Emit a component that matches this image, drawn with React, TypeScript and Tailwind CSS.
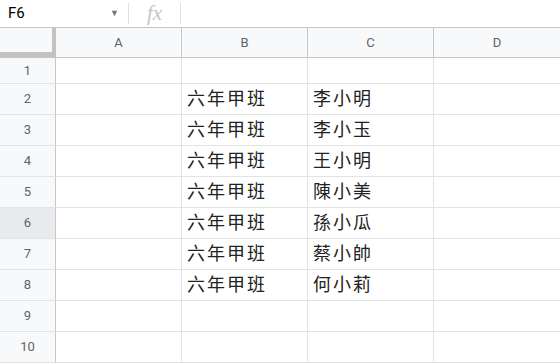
const cols = ["A", "B", "C", "D"];

const rows: [string, string][] = [
  ["", ""],
  ["六年甲班", "李小明"],
  ["六年甲班", "李小玉"],
  ["六年甲班", "王小明"],
  ["六年甲班", "陳小美"],
  ["六年甲班", "孫小瓜"],
  ["六年甲班", "蔡小帥"],
  ["六年甲班", "何小莉"],
  ["", ""],
  ["", ""],
];

const cjk = "font-['Noto_Sans_CJK_TC','Noto_Sans_CJK_SC',sans-serif]";

export default function App() {
  return (
    <div className="h-[363px] w-[560px] overflow-hidden bg-white font-['Roboto','Liberation_Sans',sans-serif]">
      {/* name box + formula bar */}
      <div className="flex h-[28px] items-center border-b border-[#c7c7c7]">
        <div className="flex w-[128px] items-center pl-[8px] pr-[9px]">
          <span className="flex-1 text-[15px] text-black">F6</span>
          <span className="text-[9px] text-[#777]">▼</span>
        </div>
        <div className="h-[21px] w-px bg-[#e0e0e0]" />
        <div className="flex w-[51px] justify-center font-['Liberation_Serif',serif] text-[21px] italic leading-none text-[#c4c4c4]">
          fx
        </div>
        <div className="h-[21px] w-px bg-[#e0e0e0]" />
      </div>

      {/* column headers */}
      <div className="grid h-[30px] grid-cols-[56px_126px_126px_126px_126px] border-b border-[#c7c7c7] bg-[#f8f9fa]">
        <div className="border-b-[5px] border-r-[4px] border-[#c2c2c2]" />
        {cols.map((c) => (
          <div
            key={c}
            className="flex items-center justify-center border-r border-[#c7c7c7] text-[13px] text-[#5f6368] last:border-r-0"
          >
            {c}
          </div>
        ))}
      </div>

      {/* rows */}
      {rows.map(([b, c], i) => (
        <div
          key={i}
          className={`grid grid-cols-[56px_126px_126px_126px_126px] ${i === 0 ? "h-[26px]" : "h-[31px]"}`}
        >
          <div
            className={`flex items-center justify-center border-b border-r border-b-[#e2e3e3] border-r-[#c7c7c7] text-[13px] text-[#5f6368] ${
              i === 5 ? "bg-[#e8eaed]" : "bg-[#f8f9fa]"
            }`}
          >
            {i + 1}
          </div>
          <div className="border-b border-r border-[#e2e3e3]" />
          <div className={`flex items-end border-b border-r border-[#e2e3e3] pb-[3px] pl-[5px] text-[18px] tracking-[2px] text-[#222] ${cjk}`}>
            {b}
          </div>
          <div className={`flex items-end border-b border-r border-[#e2e3e3] pb-[3px] pl-[5px] text-[18px] tracking-[2px] text-[#222] ${cjk}`}>
            {c}
          </div>
          <div className="border-b border-[#e2e3e3]" />
        </div>
      ))}
    </div>
  );
}
